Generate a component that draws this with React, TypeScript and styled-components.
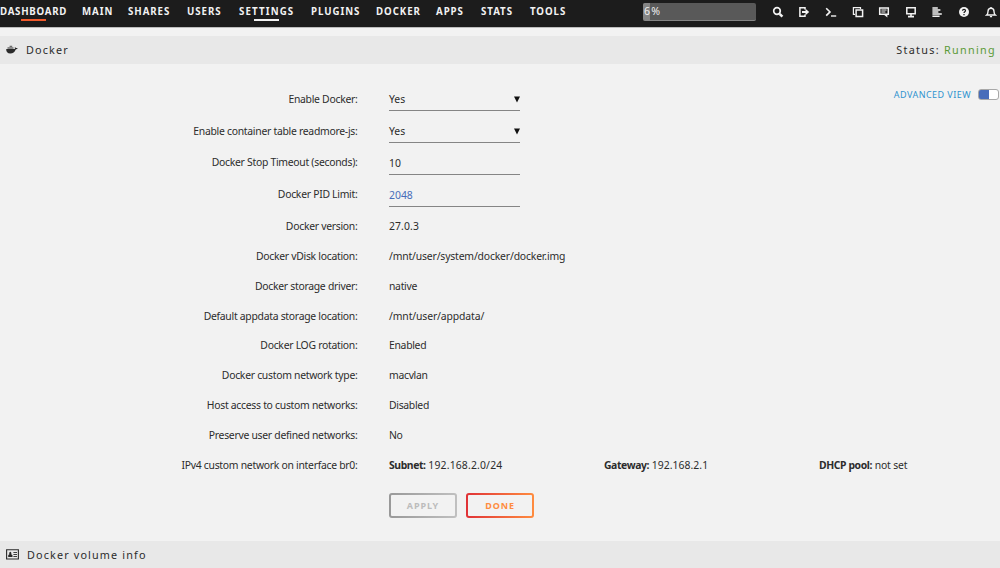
import React from 'react';
import styled, { createGlobalStyle } from 'styled-components';

const COLORS = {
  page: '#f2f2f2',
  header: '#1c1c1c',
  bar: '#e8e8e8',
  text: '#2c2c2c',
  line: '#858585',
  accent: '#486dba',
  link: '#2f93cf',
  green: '#5a9a36',
  orange: '#ff8c3f',
};

type MenuItem = { label: string; width: number; mark?: string; tracking?: number };

const MENU: MenuItem[] = [
  { label: 'DASHBOARD', width: 82, mark: '#f15a2c', tracking: 0.75 },
  { label: 'MAIN', width: 46 },
  { label: 'SHARES', width: 59 },
  { label: 'USERS', width: 52 },
  { label: 'SETTINGS', width: 72, mark: '#f2f2f2', tracking: 1.15 },
  { label: 'PLUGINS', width: 65 },
  { label: 'DOCKER', width: 60 },
  { label: 'APPS', width: 45 },
  { label: 'STATS', width: 49 },
  { label: 'TOOLS', width: 50 },
];

type Setting = { label: string; value: string; kind?: 'select' | 'input'; changed?: boolean; tracking?: number };

const SETTINGS: Setting[] = [
  { label: 'Enable Docker:', value: 'Yes', kind: 'select' },
  { label: 'Enable container table readmore-js:', value: 'Yes', kind: 'select' },
  { label: 'Docker Stop Timeout (seconds):', value: '10', kind: 'input' },
  { label: 'Docker PID Limit:', value: '2048', kind: 'input', changed: true },
  { label: 'Docker version:', value: '27.0.3', tracking: 0.1 },
  { label: 'Docker vDisk location:', value: '/mnt/user/system/docker/docker.img', tracking: -0.17 },
  { label: 'Docker storage driver:', value: 'native' },
  { label: 'Default appdata storage location:', value: '/mnt/user/appdata/', tracking: -0.12 },
  { label: 'Docker LOG rotation:', value: 'Enabled' },
  { label: 'Docker custom network type:', value: 'macvlan' },
  { label: 'Host access to custom networks:', value: 'Disabled' },
  { label: 'Preserve user defined networks:', value: 'No' },
];

const NETWORK = [
  { name: 'Subnet:', value: '192.168.2.0/24', tracking: 0.17 },
  { name: 'Gateway:', value: '192.168.2.1', tracking: 0.05 },
  { name: 'DHCP pool:', value: 'not set', tracking: -0.15 },
];

const TOOL_ICONS: { name: string; art: React.ReactNode }[] = [
  {
    name: 'search',
    art: (
      <>
        <circle cx="5" cy="5" r="3.3" strokeWidth="1.7" />
        <path d="M7.6 7.8 10.4 10.7" strokeWidth="2.5" />
      </>
    ),
  },
  {
    name: 'logout',
    art: (
      <>
        <path d="M7 3.6V1.8H1.9v8.4H7V8.4" strokeWidth="1.5" />
        <path d="M4 6h4" strokeWidth="2" />
        <path d="M7.5 2.7 11.2 6 7.5 9.3z" fill="currentColor" stroke="none" />
      </>
    ),
  },
  {
    name: 'terminal',
    art: (
      <>
        <path d="M1.2 2.2 5 5.9 1.2 9.6" strokeWidth="1.6" />
        <path d="M6 10h5.2" strokeWidth="1.4" />
      </>
    ),
  },
  {
    name: 'copy',
    art: (
      <>
        <path d="M3 8.3H1.4V1.6h7.1V3" strokeWidth="1.2" />
        <path d="M4.1 4.1h6.5v6.5H4.1z" strokeWidth="1.5" />
      </>
    ),
  },
  {
    name: 'feedback',
    art: (
      <>
        <path d="M1.7 1.9h8.6v6.4H1.7z" strokeWidth="1.5" />
        <path d="M3.4 4h5.2M3.4 6h4" strokeWidth="1" />
        <path d="M5.6 8.5h3.8v3z" fill="currentColor" stroke="none" />
      </>
    ),
  },
  {
    name: 'monitor',
    art: (
      <>
        <path d="M1.8 1.8h8.4v6H1.8z" strokeWidth="1.5" />
        <path d="M6 8v2.4M3 10.6h6" strokeWidth="1.6" />
      </>
    ),
  },
  {
    name: 'log',
    art: <path d="M1.4 2h5.4M1.4 4.1h8M1.4 6.1h6M1.4 8.1h9.4M1.4 10.2h7.2" strokeWidth="1.5" />,
  },
  {
    name: 'help',
    art: (
      <>
        <circle cx="6" cy="6" r="5" fill="currentColor" stroke="none" />
        <path d="M4.5 4.7C4.6 2.8 7.6 2.9 7.5 4.7 7.4 5.7 6 5.7 6 7" stroke={COLORS.header} strokeWidth="1.2" />
        <path d="M6 7.9v1.3" stroke={COLORS.header} strokeWidth="1.3" />
      </>
    ),
  },
  {
    name: 'bell',
    art: (
      <>
        <path d="M1.7 9C3 7.9 2.9 6.6 3 5.2 3.2 1.3 8.8 1.3 9 5.2c.1 1.4 0 2.7 1.3 3.8z" strokeWidth="1.4" />
        <path d="M6 1v1.2M4.9 10.6h2.2" strokeWidth="1.4" />
      </>
    ),
  },
];

const WhaleIcon = () => (
  <svg width="12" height="10" viewBox="0 0 12 10" fill="#2a2a2a">
    <path d="M.2 3.9h8.6c.3-.8.2-1.5-.1-2 .7.1 1.1.6 1.2 1.1.7-.1 1.3 0 1.8.3-.4.8-1.1 1.1-2 1.1C8.8 7 7 8.4 4.3 8.4 1.5 8.4.1 6.7.2 3.9z" />
    <path d="M1.5 2.2h6v1.5h-6zM3.6.7h2.6V2H3.6z" opacity=".65" />
  </svg>
);

const CardIcon = () => (
  <svg width="13" height="11" viewBox="0 0 13 11" fill="none" stroke="#2a2a2a">
    <path d="M.6.8h11.8V10H.6z" strokeWidth="1.1" />
    <path d="M2.2 8V6.4c.2-.8.8-1 1.1-1C2.6 2 6 2 5.3 5.4c.5 0 1 .3 1.2 1V8z" fill="#2a2a2a" stroke="none" />
    <path d="M7.4 3.5H11M7.4 5.5H11M7.4 7.5H11" strokeWidth=".9" />
  </svg>
);

const App: React.FC = () => (
  <Page>
    <GlobalStyle />
    <Header>
      <Menu>
        {MENU.map(({ label, width, mark, tracking }) => (
          <MenuCell key={label} $width={width}>
            <MenuLink $mark={mark} $tracking={tracking}>
              {label}
            </MenuLink>
          </MenuCell>
        ))}
      </Menu>
      <Usage>
        <UsageFill style={{ width: '6%' }} />
        <UsageText>6%</UsageText>
      </Usage>
      <Tools>
        {TOOL_ICONS.map(({ name, art }) => (
          <ToolButton key={name} aria-label={name}>
            <svg width="12" height="12" viewBox="0 0 12 12" fill="none" stroke="currentColor">
              {art}
            </svg>
          </ToolButton>
        ))}
      </Tools>
    </Header>

    <TitleBar>
      <WhaleIcon />
      <Title>Docker</Title>
      <Status>
        Status: <Running>Running</Running>
      </Status>
    </TitleBar>

    <Content>
      <Form>
        {SETTINGS.map(({ label, value, kind, changed, tracking }) => (
          <Row key={label} $tall={!!kind}>
            <Label $raised={kind === 'input'}>{label}</Label>
            {kind ? (
              <Field $changed={changed}>
                {value}
                {kind === 'select' && (
                  <Arrow viewBox="0 0 6 7">
                    <path d="M0 .5h6L3 6.5z" />
                  </Arrow>
                )}
              </Field>
            ) : (
              <Value $tracking={tracking}>{value}</Value>
            )}
          </Row>
        ))}
        <Row>
          <Label>IPv4 custom network on interface br0:</Label>
          {NETWORK.map(({ name, value, tracking }) => (
            <NetworkCell key={name}>
              <NetworkName>{name}</NetworkName> <Value $tracking={tracking}>{value}</Value>
            </NetworkCell>
          ))}
        </Row>
        <Buttons>
          <Button disabled>APPLY</Button>
          <Button>DONE</Button>
        </Buttons>
      </Form>
      <ViewSwitch>
        ADVANCED VIEW
        <Toggle />
      </ViewSwitch>
    </Content>

    <TitleBar>
      <CardIcon />
      <Title>Docker volume info</Title>
    </TitleBar>
  </Page>
);

export default App;

const GlobalStyle = createGlobalStyle`
  * {
    box-sizing: border-box;
  }

  body {
    margin: 0;
    overflow: hidden;
    background: ${COLORS.page};
  }
`;

const Page = styled.div`
  display: flex;
  flex-direction: column;
  height: 568px;
  overflow: hidden;
  font-family: 'Noto Sans', sans-serif;
  font-size: 10.4px;
  line-height: 14px;
  color: ${COLORS.text};
  white-space: nowrap;
`;

const Header = styled.header`
  display: flex;
  flex: none;
  height: 28px;
  margin-bottom: 8px;
  border-bottom: 1px solid #bdbdbd;
  background: ${COLORS.header};
  color: ${COLORS.page};
`;

const Menu = styled.nav`
  display: flex;
  flex: none;
  width: 643px;
`;

const MenuCell = styled.div<{ $width: number }>`
  width: ${({ $width }) => $width}px;
`;

const MenuLink = styled.a<{ $mark?: string; $tracking?: number }>`
  display: inline-flex;
  flex-direction: column;
  align-items: center;
  padding-top: 4px;
  font-size: 9.7px;
  font-weight: 700;
  line-height: 15px;
  letter-spacing: ${({ $tracking = 0.95 }) => $tracking}px;

  &::after {
    content: '';
    width: 25px;
    height: 2px;
    background: ${({ $mark }) => $mark || 'transparent'};
  }
`;

const Usage = styled.div`
  display: grid;
  flex: none;
  width: 113px;
  height: 18px;
  margin-top: 3px;
  border-bottom: 1px solid #858585;
  border-radius: 2px;
  background: #595959;
  overflow: hidden;

  > * {
    grid-area: 1 / 1;
  }
`;

const UsageFill = styled.div`
  background: #858585;
`;

const UsageText = styled.span`
  padding-left: 1px;
  font-size: 10.6px;
  line-height: 16px;
  letter-spacing: 1.1px;
`;

const Tools = styled.div`
  display: flex;
  flex: none;
  margin-left: 8.5px;
`;

const ToolButton = styled.button`
  display: flex;
  justify-content: center;
  width: 26.6px;
  padding: 6px 0 0;
  border: 0;
  background: none;
  color: ${COLORS.page};
`;

const TitleBar = styled.div`
  display: flex;
  flex: none;
  align-items: center;
  height: 28px;
  padding: 0 4px 1px 6px;
  background: ${COLORS.bar};

  svg {
    flex: none;
  }
`;

const Title = styled.h1`
  margin: 0 0 0 8px;
  font-size: 10.8px;
  font-weight: 400;
  letter-spacing: 1.15px;
`;

const Status = styled.div`
  margin-left: auto;
  font-size: 10.8px;
  letter-spacing: 1.3px;
`;

const Running = styled.span`
  color: ${COLORS.green};
`;

const Content = styled.main`
  display: flex;
  flex: none;
  justify-content: space-between;
  height: 477px;
  padding-top: 20px;
`;

const Form = styled.div`
  width: 880px;
`;

const Row = styled.div<{ $tall?: boolean }>`
  display: flex;
  align-items: center;
  height: ${({ $tall }) => ($tall ? 31.9 : 29.87)}px;
`;

const Label = styled.label<{ $raised?: boolean }>`
  flex: none;
  width: 357.5px;
  margin-right: 31.5px;
  padding-bottom: ${({ $raised }) => ($raised ? 3 : 1)}px;
  text-align: right;
  letter-spacing: -0.28px;
`;

const Value = styled.span<{ $tracking?: number }>`
  padding-bottom: 1px;
  letter-spacing: ${({ $tracking = -0.3 }) => $tracking}px;
`;

const Field = styled.div<{ $changed?: boolean }>`
  display: flex;
  align-items: center;
  justify-content: space-between;
  width: 131px;
  height: 23px;
  border-bottom: 1px solid ${COLORS.line};
  color: ${({ $changed }) => ($changed ? COLORS.accent : COLORS.text)};
`;

const Arrow = styled.svg`
  width: 6px;
  height: 7px;
  fill: #111;
`;

const NetworkCell = styled.span`
  flex: none;
  width: 215px;
  padding-bottom: 1px;
`;

const NetworkName = styled.b`
  letter-spacing: -0.4px;
`;

const Buttons = styled.div`
  display: flex;
  gap: 9px;
  padding: 13px 0 0 389px;
`;

const Button = styled.button`
  width: 68px;
  height: 25px;
  padding: 0;
  border: 2px solid transparent;
  border-radius: 3px;
  background: linear-gradient(${COLORS.page}, ${COLORS.page}) padding-box,
    linear-gradient(90deg, #e03237, ${COLORS.orange}) border-box;
  font-family: inherit;
  font-size: 9px;
  font-weight: 700;
  letter-spacing: 0.9px;
  color: ${COLORS.orange};

  &:disabled {
    background: linear-gradient(${COLORS.page}, ${COLORS.page}) padding-box,
      linear-gradient(90deg, #999, #c0c0c0) border-box;
    color: #bcbcbc;
  }
`;

const ViewSwitch = styled.div`
  display: flex;
  flex: none;
  align-items: center;
  gap: 7px;
  height: 21px;
  margin-right: 1px;
  font-size: 9px;
  letter-spacing: 0.45px;
  color: ${COLORS.link};
`;

const Toggle = styled.span`
  width: 21px;
  height: 11px;
  border: 1px solid #a8a8a8;
  border-radius: 3px;
  background: linear-gradient(90deg, ${COLORS.accent} 10px, #fff 10px);
`;
